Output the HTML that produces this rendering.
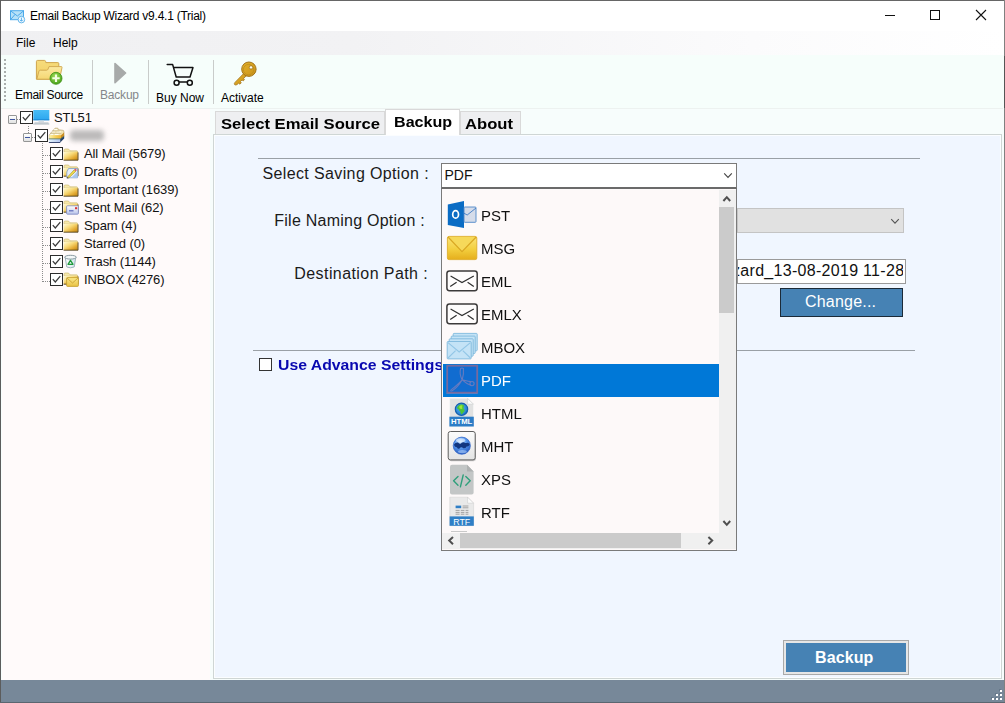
<!DOCTYPE html>
<html>
<head>
<meta charset="utf-8">
<title>Email Backup Wizard</title>
<style>
*{box-sizing:border-box;margin:0;padding:0}
html,body{width:1005px;height:703px;overflow:hidden;background:#fff}
body{font-family:"Liberation Sans",sans-serif;color:#000;position:relative}
.abs{position:absolute}
.t{position:absolute;white-space:nowrap;line-height:1}
/* window chrome */
#win{position:absolute;left:0;top:0;width:1005px;height:703px;background:#fff;overflow:hidden}
#titlebar{left:1px;top:1px;width:1003px;height:30px;background:#fff}
#menubar{left:1px;top:31px;width:1003px;height:24px;background:linear-gradient(to right,#f0f0f2 0%,#f2f2f4 35%,#fbfbfc 75%,#ffffff 100%)}
#toolbar{left:1px;top:55px;width:1003px;height:53px;background:#f6fefb}
#tabstrip{left:213px;top:108px;width:791px;height:26px;background:#f6fdfb}
#tree{left:2px;top:109px;width:208px;height:571px;background:#fffafa}
#panel{left:213px;top:134px;width:789px;height:545px;background:#f0f6ff;border:1px solid #cfd6d5;box-shadow:inset 0 0 0 1px #fbfdff}
#status{left:1px;top:680px;width:1003px;height:22px;background:#778899}
.ui{font-size:12px}
.tree{font-size:13px;color:#111;letter-spacing:-0.1px}
.lbl{font-size:16px;color:#1a1a1a}
.dd{font-size:15.5px;color:#111;transform-origin:0 0;transform:scaleX(0.965)}
.sep{position:absolute;width:1px;top:60px;height:44px;background:#c9ccca}
.cb{position:absolute;width:13px;height:13px;border:1px solid #2b2b2b;background:#fff}
.cb svg{position:absolute;left:0;top:0}
.exp{position:absolute;width:9px;height:9px;border:1px solid #969696;border-radius:1px;background:linear-gradient(#fff,#e2e2e2)}
.exp i{position:absolute;left:1px;top:3px;width:5px;height:1px;background:#3f55a0}
.hdot{position:absolute;height:1px;background-image:linear-gradient(to right,#8c8c8c 50%,transparent 50%);background-size:2px 1px}
.vdot{position:absolute;width:1px;background-image:linear-gradient(to bottom,#8c8c8c 50%,transparent 50%);background-size:1px 2px}
</style>
</head>
<body>
<div id="win">
  <!-- window borders -->
  <div class="abs" style="left:0;top:0;width:1005px;height:1px;background:#666"></div>
  <div class="abs" style="left:0;top:0;width:1px;height:703px;background:#5c5c5c"></div>
  <div class="abs" style="left:1004px;top:0;width:1px;height:703px;background:#808080"></div><div class="abs" style="left:1004px;top:56px;width:1px;height:52px;background:#555"></div>
  <div class="abs" style="left:0;top:702px;width:1005px;height:1px;background:#5b6670"></div>

  <div id="titlebar" class="abs"></div>
  <div id="menubar" class="abs"></div>
  <div id="toolbar" class="abs"></div>
  <div id="tabstrip" class="abs"></div>
  <div class="abs" style="left:1px;top:108px;width:1003px;height:572px;background:#f7fdfc"></div>
  <div class="abs" style="left:1px;top:108px;width:1002px;height:1px;background:#edf2f0"></div>
  <div id="tree" class="abs"></div>
  <div id="panel" class="abs"></div>
  <div id="status" class="abs"></div>

  <!-- TITLE -->
  <div class="t ui" style="left:30px;top:10px;letter-spacing:-0.25px">Email Backup Wizard v9.4.1 (Trial)</div>
  <!-- MENU -->
  <div class="t ui" style="left:16px;top:37px">File</div>
  <div class="t ui" style="left:53px;top:37px">Help</div>
  <!-- TOOLBAR -->
  <div class="sep" style="left:92px"></div>
  <div class="sep" style="left:148px"></div>
  <div class="sep" style="left:213px"></div>
  <div class="t ui" style="left:15px;top:89px;letter-spacing:-0.3px">Email Source</div>
  <div class="t ui" style="left:100px;top:89px;color:#84878a;letter-spacing:-0.2px">Backup</div>
  <div class="t ui" style="left:156px;top:92px">Buy Now</div>
  <div class="t ui" style="left:221px;top:92px">Activate</div>

  <!-- TABS -->
  <div class="abs" style="left:215px;top:111px;width:170px;height:23px;background:#eeeff1;border:1px solid #d9d9d9;border-bottom:none"></div>
  <div class="abs" style="left:460px;top:111px;width:61px;height:23px;background:#eeeff1;border:1px solid #d9d9d9;border-bottom:none"></div>
  <div class="abs" style="left:385px;top:109px;width:75px;height:26px;background:#fff;border:1px solid #d9d9d9;border-bottom:none"></div>
  <div class="t" style="left:221px;top:115.6px;font-size:15.5px;font-weight:700;transform-origin:0 0;transform:scaleX(1.073)">Select Email Source</div>
  <div class="t" style="left:393.5px;top:113.9px;font-size:15.5px;font-weight:700;transform-origin:0 0;transform:scaleX(1.039)">Backup</div>
  <div class="t" style="left:465px;top:115.6px;font-size:15.5px;font-weight:700;transform-origin:0 0;transform:scaleX(1.072)">About</div>

  <!-- PANEL CONTENT -->
  <div class="abs" style="left:258px;top:158px;width:662px;height:1px;background:#9aa0a6"></div>
  <div class="abs" style="left:253px;top:350px;width:662px;height:1px;background:#9aa0a6"></div>
  <div class="t lbl" style="left:262.5px;top:166px;letter-spacing:0.37px">Select Saving Option :</div>
  <div class="t lbl" style="left:274.3px;top:213px;letter-spacing:0.24px">File Naming Option :</div>
  <div class="t lbl" style="left:294.3px;top:266px;letter-spacing:0.42px">Destination Path :</div>
  <div class="abs" style="left:259px;top:358px;width:13px;height:13px;border:1px solid #333;background:#fff"></div>
  <div class="t" style="left:278px;top:357px;font-size:15px;font-weight:700;color:#0808b0;transform-origin:0 0;transform:scaleX(1.052)">Use Advance Settings</div>

  <!-- second combo (disabled) -->
  <div class="abs" style="left:737px;top:208px;width:167px;height:25px;background:#e1e1e1;border:1px solid #c4c4c4"></div>
  <!-- path textbox -->
  <div class="abs" style="left:737px;top:259px;width:169px;height:25px;background:#fff;border:1px solid #9a9a9a;overflow:hidden">
    <div class="t lbl" style="left:-6px;top:3px;letter-spacing:0.3px;color:#111">zard_13-08-2019 11-28</div><div class="abs" style="left:165px;top:0;width:3px;height:23px;background:#fff"></div>
  </div>
  <!-- change button -->
  <div class="abs" style="left:780px;top:288px;width:123px;height:29px;background:#4682b4;border:1px solid #1b2a38"></div>
  <div class="t lbl" style="left:805px;top:294px;color:#fff;letter-spacing:0.2px">Change...</div>
  <!-- backup button -->
  <div class="abs" style="left:783px;top:640px;width:126px;height:35px;background:#e6e6e6;border:1px solid #a9a9a9"></div>
  <div class="abs" style="left:786px;top:643px;width:120px;height:29px;background:#4682b4"></div>
  <div class="t" style="left:815px;top:650px;font-size:16px;font-weight:700;color:#fff;letter-spacing:0.1px">Backup</div>

  <!-- TREE -->
  <div class="exp" style="left:8px;top:115px"><i></i></div>
  <div class="hdot" style="left:17px;top:119px;width:3px"></div>
  <div class="cb" style="left:20px;top:111px"><svg width="11" height="11" viewBox="0 0 11 11"><path d="M1.8 5.2 L4.3 8 L9.3 2.2" fill="none" stroke="#3a3a3a" stroke-width="1.25"/></svg></div>
  <svg class="abs" style="left:33px;top:110px" width="17" height="15" viewBox="0 0 17 15"><defs><linearGradient id="mon" x1="0" y1="0" x2="0" y2="1"><stop offset="0" stop-color="#49bdf6"/><stop offset="1" stop-color="#2ba6ef"/></linearGradient></defs><rect x="0.3" y="0" width="16" height="10.2" fill="url(#mon)"/><rect x="0.3" y="9.4" width="16" height="0.9" fill="#1b84cf"/><rect x="5.5" y="10.6" width="5.5" height="1.7" fill="#d5dbe0"/><rect x="1.5" y="12.4" width="14" height="1.1" fill="#b8c2ca"/><rect x="0.3" y="13.6" width="16" height="0.8" fill="#9aa7b2"/></svg>
  <div class="t tree" style="left:54px;top:111px">STL51</div>
  <div class="vdot" style="left:28px;top:126px;height:7px"></div>
  <div class="exp" style="left:23px;top:133px"><i></i></div>
  <div class="hdot" style="left:32px;top:137px;width:3px"></div>
  <div class="cb" style="left:35px;top:129px"><svg width="11" height="11" viewBox="0 0 11 11"><path d="M1.8 5.2 L4.3 8 L9.3 2.2" fill="none" stroke="#3a3a3a" stroke-width="1.25"/></svg></div>
  <svg class="abs" style="left:48px;top:127px" width="17" height="17" viewBox="0 0 17 17"><defs><linearGradient id="ty" x1="0" y1="0" x2="1" y2="0"><stop offset="0" stop-color="#fdf3a8"/><stop offset="0.55" stop-color="#f7cf58"/><stop offset="1" stop-color="#eeb234"/></linearGradient><linearGradient id="tb" x1="0" y1="0" x2="1" y2="0"><stop offset="0" stop-color="#e4f4fb"/><stop offset="1" stop-color="#b4c6ef"/></linearGradient></defs><path d="M1.3 8.2 L3.4 5.4 L5.6 3 L7 1.2 L9.8 1.2 L10.6 2.8 L15.4 3.4 L16 5.2 L16 9.4 L13 11.6 L1.3 11.6 Z" fill="#f3e6b4" stroke="#b9a574" stroke-width="0.7"/><path d="M6.2 2.6 H9.2 M3.8 5 H7 M8.6 5 H13 M2.4 7.4 H5.2 M6.8 7.4 H10.6" stroke="#fffdf0" stroke-width="1.1" fill="none"/><path d="M4 3.9 H11.4 M2.2 6.3 H13.4" stroke="#b9a574" stroke-width="0.6" fill="none"/><rect x="1.3" y="8.2" width="11.7" height="3.5" fill="url(#ty)"/><path d="M13 8.2 L16 5.4 L16 9.4 L13 11.7 Z" fill="#c98c22"/><path d="M0.9 12 L12.2 12 L12.2 15.3 L0.9 15.3 Z" fill="url(#tb)"/><path d="M12.2 12 L16.2 9.2 L16.2 11.6 L12.2 15.6 Z" fill="#23406a"/><path d="M0.6 11.9 H12.4 L16.2 9.2" fill="none" stroke="#3c6a5c" stroke-width="0.7"/><path d="M0.9 15.5 H12.2" stroke="#2a3a66" stroke-width="0.9"/></svg>
  <div class="abs" style="left:70px;top:130px;width:34px;height:11px;background:#bcbaba;border-radius:4px;filter:blur(2.4px)"></div>
  <div class="vdot" style="left:42px;top:143px;height:139px"></div>
  <div class="hdot" style="left:43px;top:155px;width:7px"></div>
  <div class="cb" style="left:50px;top:147px"><svg width="11" height="11" viewBox="0 0 11 11"><path d="M1.8 5.2 L4.3 8 L9.3 2.2" fill="none" stroke="#3a3a3a" stroke-width="1.25"/></svg></div>
  <svg class="abs" style="left:63px;top:148px" width="16" height="13" viewBox="0 0 16 13"><defs><linearGradient id="fg0" x1="0" y1="0" x2="1" y2="1"><stop offset="0" stop-color="#fffad6"/><stop offset="0.4" stop-color="#f8da78"/><stop offset="0.72" stop-color="#e3a931"/><stop offset="1" stop-color="#b98218"/></linearGradient></defs><path d="M1 2.2 Q1 1 2.2 1 L5.5 1 L7 2.8 L13.6 2.8 Q14.6 2.8 14.6 3.8 L14.6 4.2 L1 4.2 Z" fill="#f5e7ab" stroke="#c9b56a" stroke-width="0.6"/><path d="M0.6 4 L14.8 4 L14.8 12 L0.6 12 Z" fill="url(#fg0)"/><path d="M0.6 12.2 L15 12.2 L15 4.4" fill="none" stroke="#4e3b0d" stroke-width="0.9"/></svg>
  <div class="t tree" style="left:84px;top:147px">All Mail (5679)</div>
  <div class="hdot" style="left:43px;top:173px;width:7px"></div>
  <div class="cb" style="left:50px;top:165px"><svg width="11" height="11" viewBox="0 0 11 11"><path d="M1.8 5.2 L4.3 8 L9.3 2.2" fill="none" stroke="#3a3a3a" stroke-width="1.25"/></svg></div>
  <svg class="abs" style="left:63px;top:164px" width="16" height="13" viewBox="0 0 16 13"><defs><linearGradient id="fg1" x1="0" y1="0" x2="1" y2="1"><stop offset="0" stop-color="#fffad6"/><stop offset="0.4" stop-color="#f8da78"/><stop offset="0.72" stop-color="#e3a931"/><stop offset="1" stop-color="#b98218"/></linearGradient></defs><path d="M1 2.2 Q1 1 2.2 1 L5.5 1 L7 2.8 L13.6 2.8 Q14.6 2.8 14.6 3.8 L14.6 4.2 L1 4.2 Z" fill="#f5e7ab" stroke="#c9b56a" stroke-width="0.6"/><path d="M0.6 4 L14.8 4 L14.8 12 L0.6 12 Z" fill="url(#fg1)"/><path d="M0.6 12.2 L15 12.2 L15 4.4" fill="none" stroke="#4e3b0d" stroke-width="0.9"/></svg>
  <svg class="abs" style="left:66px;top:167px" width="13" height="12" viewBox="0 0 13 12"><path d="M2.5 1.5 L11.5 1.5 L11.5 10.8 L0.8 10.8 L0.8 5 Z" fill="#e6effb" stroke="#7f9fcb" stroke-width="0.8"/><path d="M5 11 L11.5 4.5 L11.5 10.8 Z" fill="#a9c6ee"/><path d="M1.2 10.3 L8.2 2.8 L9.8 4.3 L2.8 11 Z" fill="#f2dc4a" stroke="#8a7a1a" stroke-width="0.5"/><path d="M8.2 2.8 L9.3 1.6 L11 3.1 L9.8 4.3 Z" fill="#e2566a"/><path d="M1.2 10.3 L2.8 11 L0.8 11.6 Z" fill="#333"/></svg>
  <div class="t tree" style="left:84px;top:165px">Drafts (0)</div>
  <div class="hdot" style="left:43px;top:191px;width:7px"></div>
  <div class="cb" style="left:50px;top:183px"><svg width="11" height="11" viewBox="0 0 11 11"><path d="M1.8 5.2 L4.3 8 L9.3 2.2" fill="none" stroke="#3a3a3a" stroke-width="1.25"/></svg></div>
  <svg class="abs" style="left:63px;top:184px" width="16" height="13" viewBox="0 0 16 13"><defs><linearGradient id="fg2" x1="0" y1="0" x2="1" y2="1"><stop offset="0" stop-color="#fffad6"/><stop offset="0.4" stop-color="#f8da78"/><stop offset="0.72" stop-color="#e3a931"/><stop offset="1" stop-color="#b98218"/></linearGradient></defs><path d="M1 2.2 Q1 1 2.2 1 L5.5 1 L7 2.8 L13.6 2.8 Q14.6 2.8 14.6 3.8 L14.6 4.2 L1 4.2 Z" fill="#f5e7ab" stroke="#c9b56a" stroke-width="0.6"/><path d="M0.6 4 L14.8 4 L14.8 12 L0.6 12 Z" fill="url(#fg2)"/><path d="M0.6 12.2 L15 12.2 L15 4.4" fill="none" stroke="#4e3b0d" stroke-width="0.9"/></svg>
  <div class="t tree" style="left:84px;top:183px">Important (1639)</div>
  <div class="hdot" style="left:43px;top:209px;width:7px"></div>
  <div class="cb" style="left:50px;top:201px"><svg width="11" height="11" viewBox="0 0 11 11"><path d="M1.8 5.2 L4.3 8 L9.3 2.2" fill="none" stroke="#3a3a3a" stroke-width="1.25"/></svg></div>
  <svg class="abs" style="left:63px;top:200px" width="16" height="13" viewBox="0 0 16 13"><defs><linearGradient id="fg3" x1="0" y1="0" x2="1" y2="1"><stop offset="0" stop-color="#fffad6"/><stop offset="0.4" stop-color="#f8da78"/><stop offset="0.72" stop-color="#e3a931"/><stop offset="1" stop-color="#b98218"/></linearGradient></defs><path d="M1 2.2 Q1 1 2.2 1 L5.5 1 L7 2.8 L13.6 2.8 Q14.6 2.8 14.6 3.8 L14.6 4.2 L1 4.2 Z" fill="#f5e7ab" stroke="#c9b56a" stroke-width="0.6"/><path d="M0.6 4 L14.8 4 L14.8 12 L0.6 12 Z" fill="url(#fg3)"/><path d="M0.6 12.2 L15 12.2 L15 4.4" fill="none" stroke="#4e3b0d" stroke-width="0.9"/></svg>
  <svg class="abs" style="left:66px;top:205px" width="13" height="10" viewBox="0 0 13 10"><defs><linearGradient id="sg" x1="0" y1="0" x2="0" y2="1"><stop offset="0" stop-color="#ffffff"/><stop offset="1" stop-color="#b9c3ea"/></linearGradient></defs><rect x="0.6" y="0.8" width="11.8" height="8.4" rx="0.8" fill="url(#sg)" stroke="#7b86c0" stroke-width="0.8"/><rect x="9" y="2.2" width="2.2" height="2" fill="#d4353c"/><rect x="3" y="5.2" width="4.5" height="1.2" fill="#5a68b8"/></svg>
  <div class="t tree" style="left:84px;top:201px">Sent Mail (62)</div>
  <div class="hdot" style="left:43px;top:227px;width:7px"></div>
  <div class="cb" style="left:50px;top:219px"><svg width="11" height="11" viewBox="0 0 11 11"><path d="M1.8 5.2 L4.3 8 L9.3 2.2" fill="none" stroke="#3a3a3a" stroke-width="1.25"/></svg></div>
  <svg class="abs" style="left:63px;top:220px" width="16" height="13" viewBox="0 0 16 13"><defs><linearGradient id="fg4" x1="0" y1="0" x2="1" y2="1"><stop offset="0" stop-color="#fffad6"/><stop offset="0.4" stop-color="#f8da78"/><stop offset="0.72" stop-color="#e3a931"/><stop offset="1" stop-color="#b98218"/></linearGradient></defs><path d="M1 2.2 Q1 1 2.2 1 L5.5 1 L7 2.8 L13.6 2.8 Q14.6 2.8 14.6 3.8 L14.6 4.2 L1 4.2 Z" fill="#f5e7ab" stroke="#c9b56a" stroke-width="0.6"/><path d="M0.6 4 L14.8 4 L14.8 12 L0.6 12 Z" fill="url(#fg4)"/><path d="M0.6 12.2 L15 12.2 L15 4.4" fill="none" stroke="#4e3b0d" stroke-width="0.9"/></svg>
  <div class="t tree" style="left:84px;top:219px">Spam (4)</div>
  <div class="hdot" style="left:43px;top:245px;width:7px"></div>
  <div class="cb" style="left:50px;top:237px"><svg width="11" height="11" viewBox="0 0 11 11"><path d="M1.8 5.2 L4.3 8 L9.3 2.2" fill="none" stroke="#3a3a3a" stroke-width="1.25"/></svg></div>
  <svg class="abs" style="left:63px;top:238px" width="16" height="13" viewBox="0 0 16 13"><defs><linearGradient id="fg5" x1="0" y1="0" x2="1" y2="1"><stop offset="0" stop-color="#fffad6"/><stop offset="0.4" stop-color="#f8da78"/><stop offset="0.72" stop-color="#e3a931"/><stop offset="1" stop-color="#b98218"/></linearGradient></defs><path d="M1 2.2 Q1 1 2.2 1 L5.5 1 L7 2.8 L13.6 2.8 Q14.6 2.8 14.6 3.8 L14.6 4.2 L1 4.2 Z" fill="#f5e7ab" stroke="#c9b56a" stroke-width="0.6"/><path d="M0.6 4 L14.8 4 L14.8 12 L0.6 12 Z" fill="url(#fg5)"/><path d="M0.6 12.2 L15 12.2 L15 4.4" fill="none" stroke="#4e3b0d" stroke-width="0.9"/></svg>
  <div class="t tree" style="left:84px;top:237px">Starred (0)</div>
  <div class="hdot" style="left:43px;top:263px;width:7px"></div>
  <div class="cb" style="left:50px;top:255px"><svg width="11" height="11" viewBox="0 0 11 11"><path d="M1.8 5.2 L4.3 8 L9.3 2.2" fill="none" stroke="#3a3a3a" stroke-width="1.25"/></svg></div>
  <svg class="abs" style="left:63px;top:254px" width="15" height="15" viewBox="0 0 15 15"><defs><linearGradient id="tg" x1="0" y1="0" x2="1" y2="0"><stop offset="0" stop-color="#ffffff"/><stop offset="1" stop-color="#cfe3ea"/></linearGradient></defs><path d="M2.2 3.5 L12.8 3.5 L11.2 13 Q7.5 14.6 3.8 13 Z" fill="url(#tg)" stroke="#8aa3ad" stroke-width="0.8"/><ellipse cx="7.5" cy="3.2" rx="5.8" ry="1.9" fill="#f4f8f9" stroke="#7d8e96" stroke-width="0.9"/><path d="M7.5 6.3 L10 10.3 L5 10.3 Z" fill="none" stroke="#1f9a3a" stroke-width="1.3" stroke-linejoin="round"/></svg>
  <div class="t tree" style="left:84px;top:255px">Trash (1144)</div>
  <div class="hdot" style="left:43px;top:281px;width:7px"></div>
  <div class="cb" style="left:50px;top:273px"><svg width="11" height="11" viewBox="0 0 11 11"><path d="M1.8 5.2 L4.3 8 L9.3 2.2" fill="none" stroke="#3a3a3a" stroke-width="1.25"/></svg></div>
  <svg class="abs" style="left:63px;top:272px" width="16" height="13" viewBox="0 0 16 13"><defs><linearGradient id="fg7" x1="0" y1="0" x2="1" y2="1"><stop offset="0" stop-color="#fffad6"/><stop offset="0.4" stop-color="#f8da78"/><stop offset="0.72" stop-color="#e3a931"/><stop offset="1" stop-color="#b98218"/></linearGradient></defs><path d="M1 2.2 Q1 1 2.2 1 L5.5 1 L7 2.8 L13.6 2.8 Q14.6 2.8 14.6 3.8 L14.6 4.2 L1 4.2 Z" fill="#f5e7ab" stroke="#c9b56a" stroke-width="0.6"/><path d="M0.6 4 L14.8 4 L14.8 12 L0.6 12 Z" fill="url(#fg7)"/><path d="M0.6 12.2 L15 12.2 L15 4.4" fill="none" stroke="#4e3b0d" stroke-width="0.9"/></svg>
  <svg class="abs" style="left:66px;top:277px" width="13" height="10" viewBox="0 0 13 10"><defs><linearGradient id="ig" x1="0" y1="0" x2="0" y2="1"><stop offset="0" stop-color="#fbe98a"/><stop offset="1" stop-color="#e9c143"/></linearGradient></defs><rect x="0.6" y="0.6" width="11.8" height="8.8" rx="0.8" fill="url(#ig)" stroke="#c39a2a" stroke-width="0.8"/><path d="M1 1 L6.5 6 L12 1" fill="none" stroke="#c9a233" stroke-width="0.9"/></svg>
  <div class="t tree" style="left:84px;top:273px">INBOX (4276)</div>
  <!-- COMBO -->
  <div class="abs" style="left:441px;top:163px;width:296px;height:26px;background:#fff;border:1px solid #7a7a7a;border-bottom:2px solid #6a6a6a"></div>
  <div class="t" style="left:444.5px;top:168px;font-size:14px;color:#111">PDF</div>
  <!-- DROPDOWN LIST -->
  <div id="ddl" class="abs" style="left:441px;top:189px;width:296px;height:362px;background:#fdf9f9;border:1px solid #7a7a7a;border-top:none"></div>
  <!-- DROPDOWN ITEMS -->
  <svg class="abs" style="left:446px;top:199px" width="33" height="33" viewBox="0 0 33 33"><path d="M1.8 5.4 L18 2.1 L18 29 L1.8 26 Z" fill="#0b6cc4"/><ellipse cx="9.6" cy="15.4" rx="2.9" ry="3.8" fill="none" stroke="#fff" stroke-width="1.7"/><rect x="18" y="8" width="12" height="15.3" rx="0.8" fill="#d5dcea" stroke="#4c86c8" stroke-width="0.9"/><path d="M18 14.2 L21.2 16 L30 9" fill="none" stroke="#3f7cc4" stroke-width="0.9"/></svg>
  <div class="t dd" style="left:481px;top:207.5px;color:#111">PST</div>
  <svg class="abs" style="left:446px;top:232px" width="33" height="33" viewBox="0 0 33 33"><defs><linearGradient id="msg" x1="0" y1="0" x2="0" y2="1"><stop offset="0" stop-color="#fbe47a"/><stop offset="0.55" stop-color="#f3cf3f"/><stop offset="1" stop-color="#e5ae1c"/></linearGradient></defs><rect x="1.4" y="4.4" width="29.4" height="23.2" rx="1.6" fill="url(#msg)" stroke="#dfae2a" stroke-width="0.9"/><path d="M2 5 L16 19.6 L30.2 5" fill="#f6d95a" stroke="#d9a722" stroke-width="1.2" stroke-linejoin="round"/></svg>
  <div class="t dd" style="left:481px;top:240.5px;color:#111">MSG</div>
  <svg class="abs" style="left:446px;top:265px" width="33" height="33" viewBox="0 0 33 33"><rect x="0.9" y="5.9" width="30.3" height="19.8" rx="2.6" fill="#fefcfc" stroke="#3c3a3a" stroke-width="1.5"/><path d="M4.6 11 L16 17.6 L27.8 11" fill="none" stroke="#2f2f2f" stroke-width="1.2"/><path d="M4.2 21.4 L10.6 17.2 M21.6 17.2 L27.8 21.4" fill="none" stroke="#2f2f2f" stroke-width="1.2"/></svg>
  <div class="t dd" style="left:481px;top:273.5px;color:#111">EML</div>
  <svg class="abs" style="left:446px;top:298px" width="33" height="33" viewBox="0 0 33 33"><rect x="0.9" y="5.9" width="30.3" height="19.8" rx="2.6" fill="#fefcfc" stroke="#3c3a3a" stroke-width="1.5"/><path d="M4.6 11 L16 17.6 L27.8 11" fill="none" stroke="#2f2f2f" stroke-width="1.2"/><path d="M4.2 21.4 L10.6 17.2 M21.6 17.2 L27.8 21.4" fill="none" stroke="#2f2f2f" stroke-width="1.2"/></svg>
  <div class="t dd" style="left:481px;top:306.5px;color:#111">EMLX</div>
  <svg class="abs" style="left:446px;top:331px" width="33" height="33" viewBox="0 0 33 33"><rect x="7.2" y="2.4" width="24" height="17.4" rx="0.8" fill="#c4e3f6" stroke="#7fb9dc" stroke-width="0.9"/><rect x="5.2" y="5.1" width="24" height="17.4" rx="0.8" fill="#c4e3f6" stroke="#7fb9dc" stroke-width="0.9"/><rect x="3.2" y="7.8" width="24" height="17.4" rx="0.8" fill="#c4e3f6" stroke="#7fb9dc" stroke-width="0.9"/><rect x="1.2" y="10.5" width="24" height="17.4" rx="0.8" fill="#c4e3f6" stroke="#7fb9dc" stroke-width="0.9"/><path d="M2 11.6 L13.2 21 L24.4 11.6 M2 27 L9.6 19.6 M24.4 27 L16.8 19.6" fill="none" stroke="#92c6e6" stroke-width="1.1"/></svg>
  <div class="t dd" style="left:481px;top:339.5px;color:#111">MBOX</div>
  <div class="abs" style="left:443px;top:364px;width:276px;height:33px;background:#0078d7"></div>
  <svg class="abs" style="left:446px;top:364px" width="33" height="33" viewBox="0 0 33 33"><rect x="0.6" y="29.2" width="31" height="0.8" fill="#4f9be6"/><rect x="1.2" y="1.7" width="30" height="27" fill="#116cd0" stroke="#776a9e" stroke-width="1.8"/><g fill="none" stroke="#667bc0" stroke-width="1.1" stroke-linecap="round" stroke-linejoin="round"><path d="M14.6 4.6 C13.6 8 14.4 12.4 16.2 15.8 M17.4 4.6 C17.8 8 17.2 12.4 16.2 15.8 M14.6 4.6 Q16 3.4 17.4 4.6"/><path d="M16.2 15.8 C13 19 9.4 22.6 5.6 25.4 C4.2 26.4 4.4 27.6 6.2 26.8 C9.8 24.6 13.4 20.6 16.2 15.8"/><path d="M16.2 15.8 C19 18.4 22 20.2 24.8 21.2 M16.2 15.8 C19.6 16.6 22.6 17.4 24.6 17.6"/><circle cx="26" cy="19.6" r="2.1"/></g></svg>
  <div class="t dd" style="left:481px;top:372.5px;color:#fff">PDF</div>
  <svg class="abs" style="left:446px;top:397px" width="33" height="33" viewBox="0 0 33 33"><defs><radialGradient id="glb" cx="0.45" cy="0.4" r="0.65"><stop offset="0" stop-color="#55b4f2"/><stop offset="0.7" stop-color="#2a86d6"/><stop offset="1" stop-color="#1561ae"/></radialGradient></defs><path d="M3.6 1.2 L21.8 1.2 L27.6 7 L27.6 29.4 L3.6 29.4 Z" fill="#e1e1e1" stroke="#f6f6f6" stroke-width="0.8"/><path d="M21.6 1.4 L21.6 7.2 L27.4 7.2 Z" fill="#fbfbfb" stroke="#cdcdcd" stroke-width="0.6"/><circle cx="15.5" cy="12.3" r="6.2" fill="url(#glb)" stroke="#1560ad" stroke-width="1.2"/><path d="M11 10.4 Q12.2 7.6 15.2 7.2 Q17.6 7.2 18.4 8.8 Q17 10.4 17.8 11.8 Q19.4 12.8 18.4 14.6 Q17 16.4 15.6 17.4 Q14.2 16.2 14.4 14.4 Q12.6 13.8 12.6 12.2 Q11 11.8 11 10.4 Z" fill="#4cc43a"/><path d="M13.2 9.4 Q14.6 8 16.4 8.4 Q15.8 10 16.4 11.4 Q15 12.6 13.8 11.6 Q13 10.6 13.2 9.4 Z" fill="#9be636"/><rect x="3.4" y="19.7" width="24.4" height="9.8" fill="#2d7cc6"/><text x="15.6" y="27.3" font-family="Liberation Sans" font-size="7.8" font-weight="700" fill="#fff" text-anchor="middle" textLength="21.4" lengthAdjust="spacingAndGlyphs">HTML</text></svg>
  <div class="t dd" style="left:481px;top:405.5px;color:#111">HTML</div>
  <svg class="abs" style="left:446px;top:430px" width="33" height="33" viewBox="0 0 33 33"><defs><linearGradient id="mhb" x1="0" y1="0" x2="0" y2="1"><stop offset="0" stop-color="#fcfcfc"/><stop offset="1" stop-color="#e3e3e3"/></linearGradient><radialGradient id="mhg" cx="0.42" cy="0.3" r="0.8"><stop offset="0" stop-color="#cfe6ff"/><stop offset="0.4" stop-color="#5a9bf0"/><stop offset="1" stop-color="#1a4cb4"/></radialGradient></defs><rect x="2.8" y="2.4" width="27.2" height="28.8" rx="2.4" fill="#b5b5b5" opacity="0.7"/><rect x="2.2" y="1.5" width="27" height="28.4" rx="2.2" fill="url(#mhb)" stroke="#5e5e5e" stroke-width="1"/><circle cx="15.8" cy="15.7" r="8.6" fill="url(#mhg)" stroke="#2b5fc4" stroke-width="0.7"/><path d="M8 14.4 Q9.6 12.2 12 12.6 Q13.2 14.2 15 13.4 Q16 12 18.4 12.4 Q19.4 13.6 21.4 12.8 Q23.2 13 23.8 14.8 Q22.6 16.8 20.6 16.4 Q19.6 18.6 17.2 18.2 Q15.8 16.6 14.4 17.6 Q13.4 19.4 11.6 18.6 Q11.4 16.8 9.6 17 Q8.2 16 8 14.4 Z" fill="#123680"/><ellipse cx="14.6" cy="10.2" rx="4.6" ry="2" fill="#fff" opacity="0.5"/><ellipse cx="16.4" cy="21.6" rx="4.4" ry="1.6" fill="#bcd9ff" opacity="0.55"/></svg>
  <div class="t dd" style="left:481px;top:438.5px;color:#111">MHT</div>
  <svg class="abs" style="left:446px;top:463px" width="33" height="33" viewBox="0 0 33 33"><path d="M6 1.8 L21 1.8 L27.6 8.4 L27.6 29.6 Q27.6 31.6 25.6 31.6 L6 31.6 Q4 31.6 4 29.6 L4 3.8 Q4 1.8 6 1.8 Z" fill="#c3c6c6"/><path d="M21 1.8 L27.6 8.4 L21 8.4 Z" fill="#aeb1b1"/><path d="M12 13.4 L7.6 17.8 L12 22.2 M19.8 13.4 L24.2 17.8 L19.8 22.2 M17.2 12 L14.4 23.8" fill="none" stroke="#2f9f7b" stroke-width="1.4" stroke-linecap="round" stroke-linejoin="round"/></svg>
  <div class="t dd" style="left:481px;top:471.5px;color:#111">XPS</div>
  <svg class="abs" style="left:446px;top:496px" width="33" height="33" viewBox="0 0 33 33"><path d="M3.8 1.2 L21.6 1.2 L27.6 7.2 L27.6 29.6 L3.8 29.6 Z" fill="#e9e9e9" stroke="#cfcfcf" stroke-width="0.5"/><path d="M21.6 1.2 L21.6 7.2 L27.6 7.2 Z" fill="#fbfbfb" stroke="#c6c6c6" stroke-width="0.5"/><rect x="9.6" y="9.6" width="5.6" height="2.6" fill="#2f7fc6"/><path d="M16.6 10 H22.4 M16.6 11.8 H22.4 M9.6 14.4 H13.6 M14.8 14.4 H18.4 M19.6 14.4 H22.4 M9.6 16.4 H13.6 M14.8 16.4 H18.4 M19.6 16.4 H22.4 M9.6 18.2 H13.6 M14.8 18.2 H18.4 M19.6 18.2 H22.4" stroke="#9a9a9a" stroke-width="0.9"/><rect x="3.6" y="20.4" width="24.2" height="9.4" fill="#2f7fc6"/><text x="15.7" y="28.5" font-family="Liberation Sans" font-size="9.4" font-weight="400" fill="#fff" text-anchor="middle" textLength="17" lengthAdjust="spacingAndGlyphs">RTF</text></svg>
  <div class="t dd" style="left:481px;top:504.5px;color:#111">RTF</div>
  <div class="abs" style="left:451px;top:531px;width:16px;height:1px;background:#c9c9c9"></div>
  <div class="abs" style="left:719px;top:190px;width:17px;height:343px;background:#f0f0f0"></div>
  <div class="abs" style="left:719px;top:207px;width:15px;height:106px;background:#cbcbcb"></div>
  <svg class="abs" style="left:719px;top:190px" width="17" height="17" viewBox="0 0 17 17"><path d="M4.4 11 L7.8 7.2 L11.2 11" fill="none" stroke="#4f4f4f" stroke-width="2"/></svg>
  <svg class="abs" style="left:719px;top:515px" width="17" height="17" viewBox="0 0 17 17"><path d="M4.4 6 L7.8 9.8 L11.2 6" fill="none" stroke="#4f4f4f" stroke-width="2"/></svg>
  <div class="abs" style="left:442px;top:533px;width:294px;height:16px;background:#f0f0f0"></div>
  <div class="abs" style="left:460px;top:533px;width:221px;height:15px;background:#cbcbcb"></div>
  <svg class="abs" style="left:443px;top:533px" width="17" height="16" viewBox="0 0 17 16"><path d="M10 4 L6.2 7.6 L10 11.2" fill="none" stroke="#4f4f4f" stroke-width="2"/></svg>
  <svg class="abs" style="left:702px;top:533px" width="17" height="16" viewBox="0 0 17 16"><path d="M6.4 4 L10.2 7.6 L6.4 11.2" fill="none" stroke="#4f4f4f" stroke-width="2"/></svg>
  <svg class="abs" style="left:722px;top:170px" width="12" height="10" viewBox="0 0 12 10"><path d="M2.2 3.4 L6 7.4 L9.8 3.4" fill="none" stroke="#444" stroke-width="1.1"/></svg>
  <svg class="abs" style="left:889px;top:216px" width="12" height="10" viewBox="0 0 12 10"><path d="M2.2 3.2 L6 7.2 L9.8 3.2" fill="none" stroke="#555" stroke-width="1.1"/></svg>
  <!-- TITLE ICON -->
  <svg class="abs" style="left:9px;top:9px" width="18" height="16" viewBox="0 0 18 16"><rect x="1.5" y="1.7" width="13" height="9" fill="#b5e1f8" stroke="#4aa8ea" stroke-width="1"/><path d="M1.8 2 L8.4 7 L14.4 2 M1.8 10.4 L6 5.4" fill="none" stroke="#4aa8ea" stroke-width="1"/><circle cx="12.4" cy="10.6" r="3.3" fill="#f4fbff" stroke="#55aee8" stroke-width="0.9"/><path d="M12.4 8.6 V12 M10.9 10.8 L12.4 12.3 L13.9 10.8" fill="none" stroke="#4aa8ea" stroke-width="0.9"/></svg>
  <!-- WINDOW CONTROLS -->
  <div class="abs" style="left:885px;top:15px;width:10px;height:1px;background:#111"></div>
  <div class="abs" style="left:930px;top:10px;width:10px;height:10px;border:1px solid #111"></div>
  <svg class="abs" style="left:975px;top:9px" width="12" height="12" viewBox="0 0 12 12"><path d="M1 1 L11 11 M11 1 L1 11" stroke="#111" stroke-width="1.1" fill="none"/></svg>
  <!-- TOOLBAR GRIP -->
  <div class="abs" style="left:4px;top:59px;width:2px;height:44px;background-image:linear-gradient(to bottom,#a9afad 50%,transparent 50%);background-size:2px 4px"></div>
  <!-- Email Source icon -->
  <svg class="abs" style="left:34px;top:58px" width="30" height="28" viewBox="0 0 30 28"><defs><linearGradient id="fo1" x1="0" y1="0" x2="0" y2="1"><stop offset="0" stop-color="#f6dc7c"/><stop offset="1" stop-color="#f2cf63"/></linearGradient><linearGradient id="fo2" x1="0" y1="0" x2="0" y2="1"><stop offset="0" stop-color="#fbe9a0"/><stop offset="1" stop-color="#f5d772"/></linearGradient><radialGradient id="gp" cx="0.45" cy="0.35" r="0.7"><stop offset="0" stop-color="#a6e05c"/><stop offset="1" stop-color="#3f9d14"/></radialGradient></defs><path d="M2.4 3.6 Q2.4 2.4 3.6 2.4 L10.4 2.4 Q11.4 2.4 11.6 3.4 L11.8 4.6 L23.8 4.6 Q24.8 4.6 24.8 5.6 L24.8 21.2 L2.4 21.2 Z" fill="url(#fo1)" stroke="#cfa54c" stroke-width="1"/><path d="M15 8.6 L27.4 8.6 Q28.2 8.6 28 9.6 L25.6 21.2 L2.8 21.2 L5 13 Q5.3 12.2 6.2 12.2 L12.6 12.2 Q13.6 12.2 14 11.2 Z" fill="url(#fo2)" stroke="#cfa54c" stroke-width="0.9"/><circle cx="22" cy="20.3" r="6" fill="url(#gp)" stroke="#3c8f12" stroke-width="0.8"/><path d="M22 16.6 V24 M18.3 20.3 H25.7" stroke="#f4ffe4" stroke-width="2.1" fill="none"/></svg>
  <!-- Backup arrow -->
  <svg class="abs" style="left:112px;top:61px" width="16" height="24" viewBox="0 0 16 24"><path d="M3 2.6 L13.6 12 L3 21.6 Z" fill="#a7aaa9" stroke="#a7aaa9" stroke-width="1.6" stroke-linejoin="round"/></svg>
  <!-- Cart -->
  <svg class="abs" style="left:165px;top:61px" width="31" height="27" viewBox="0 0 31 27"><g fill="none" stroke="#111" stroke-width="1.5" stroke-linecap="round" stroke-linejoin="round"><path d="M2.2 3.4 L7.6 3.4 L11.2 16 L25 16 L28 6.6 L8.6 6.6"/><path d="M11.6 21 L24.8 21"/><circle cx="11.6" cy="21.8" r="2.5" fill="#f6fefb"/><circle cx="24.8" cy="21.8" r="2.5" fill="#f6fefb"/></g></svg>
  <!-- Key -->
  <svg class="abs" style="left:230px;top:59px" width="30" height="29" viewBox="0 0 30 29"><defs><linearGradient id="kg" x1="0" y1="0" x2="1" y2="1"><stop offset="0" stop-color="#e4b22a"/><stop offset="1" stop-color="#c9921a"/></linearGradient></defs><path d="M14.2 14 L5 23.4 Q3.8 24.8 4.6 25.6 Q5.6 26.4 7 25.6 L8.6 24.2 L10 25.2 L11.2 23.8 L10.4 22.6 L12 21 L13.4 21.8 L14.4 20.6 L13.6 19.4 L17.4 15.8 Z" fill="url(#kg)" stroke="#a3741a" stroke-width="0.8"/><circle cx="18.9" cy="10.2" r="7.2" fill="url(#kg)" stroke="#a3741a" stroke-width="1"/><circle cx="18.6" cy="10.6" r="5.2" fill="none" stroke="#b98a1c" stroke-width="0.7"/><circle cx="21" cy="8.4" r="1.7" fill="#fffef4" stroke="#9a6d14" stroke-width="0.7"/></svg>
  <!-- RESIZE GRIP -->
  <svg class="abs" style="left:990px;top:688px" width="14" height="14" viewBox="0 0 14 14"><g fill="#66788a"><rect x="9" y="1" width="2" height="2"/><rect x="5" y="5" width="2" height="2"/><rect x="9" y="5" width="2" height="2"/><rect x="1" y="9" width="2" height="2"/><rect x="5" y="9" width="2" height="2"/><rect x="9" y="9" width="2" height="2"/></g><g fill="#fff"><rect x="10" y="2" width="2" height="2"/><rect x="6" y="6" width="2" height="2"/><rect x="10" y="6" width="2" height="2"/><rect x="2" y="10" width="2" height="2"/><rect x="6" y="10" width="2" height="2"/><rect x="10" y="10" width="2" height="2"/></g></svg>
</div>
</body>
</html>
